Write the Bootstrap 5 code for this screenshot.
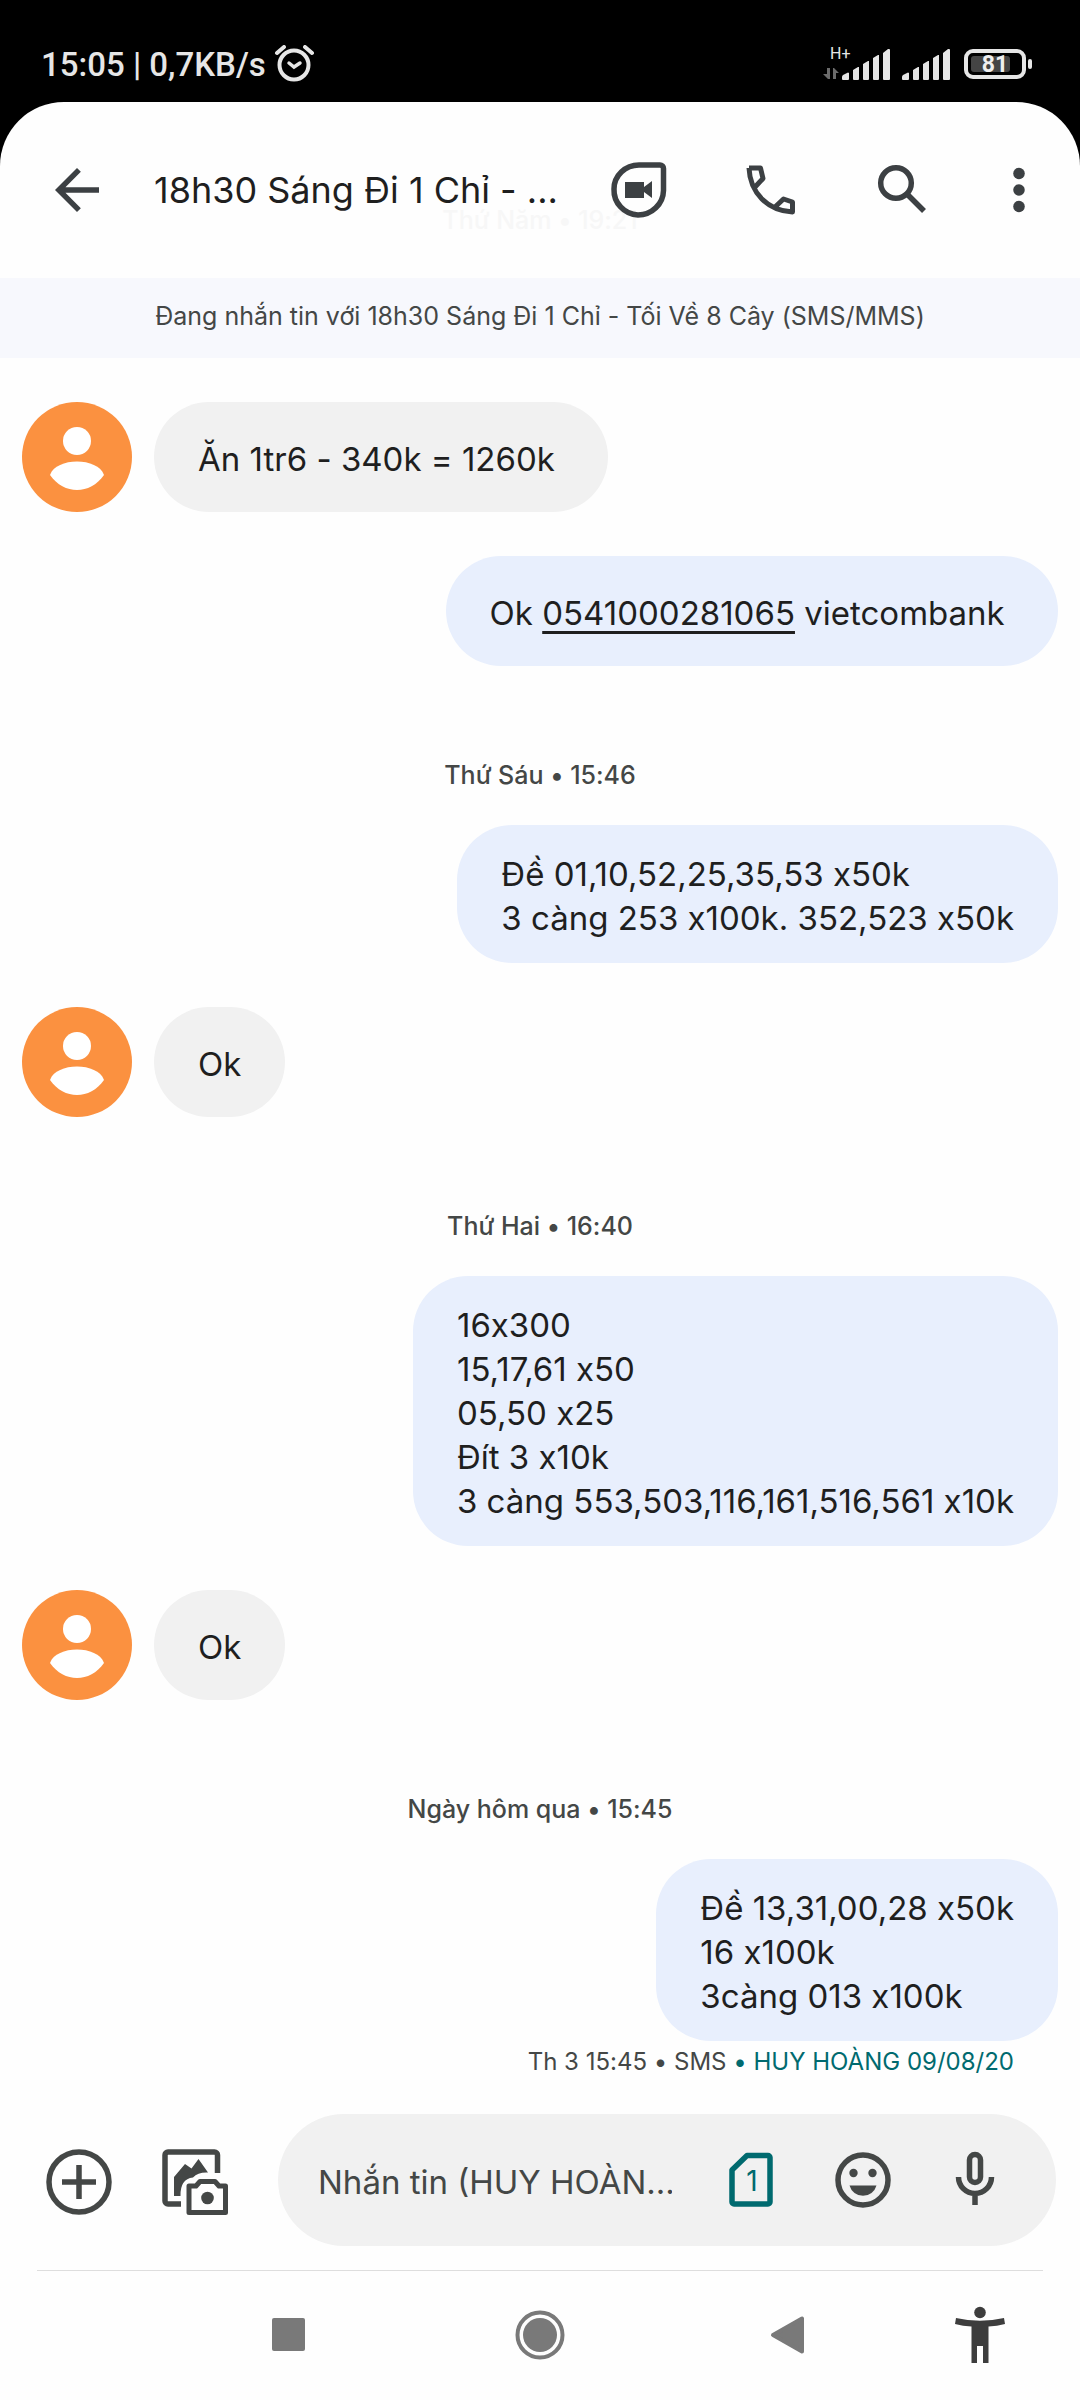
<!DOCTYPE html>
<html lang="vi">
<head>
<meta charset="utf-8">
<meta name="viewport" content="width=device-width, initial-scale=1">
<title>Tin nhắn</title>
<link href="https://cdn.jsdelivr.net/npm/bootstrap@5.3.0/dist/css/bootstrap.min.css" rel="stylesheet">
<style>
  body { background: #000; font-family: Inter, "Noto Sans", sans-serif; font-feature-settings: "calt" 0; color: #1f1f1f; }
  svg { display: block; fill: none; }
  .status { height: 102px; padding: 0 46px 0 41px; font-family: Roboto, sans-serif; color: #e6e6e6; }
  .status-left { font-size: 33px; line-height: 40px; font-weight: 500; padding-top: 45px; }
  .status-right { padding-top: 46px; }
  .screen { background: #fefefe; border-radius: 64px 64px 0 0; }
  .topbar { height: 176px; padding: 0 28px 0 44px; color: #3c4043; }
  .topbar-title { font-size: 36px; line-height: 48px; font-weight: 400; color: #1f1f1f; margin-left: 44px; }
  .ghost { left: 0; right: 0; top: 102px; font-size: 25px; line-height: 32px; font-weight: 500; color: #f7f7f7; }
  .icon-btn { width: 66px; height: 66px; padding: 0; border: 0; background: none; color: inherit; flex: none; }
  .tools { gap: 66px; }
  .tools .icon-btn:last-child { margin-left: -16px; }
  .banner { height: 80px; padding-bottom: 4px; background: #f7f8fd; color: #444746; font-size: 25px; line-height: 32px; }
  .thread { padding: 44px 22px 0; }
  .msg + .msg { margin-top: 44px; }
  .msg { gap: 22px; }
  .bubble { min-height: 110px; padding: 27px 44px 23px; border-radius: 55px; font-size: 33px; line-height: 44px; }
  .bubble-in { background: #f1f1f1; }
  .bubble-out { background: #e8effd; }
  .bubble a { color: inherit; text-underline-offset: 6px; text-decoration-thickness: 3px; }
  .stamp { font-size: 25px; line-height: 32px; font-weight: 500; color: #444746; margin: 93px 0 34px; }
  .meta { font-size: 24px; line-height: 32px; color: #444746; padding: 5px 44px 0; }
  .teal { color: #006a6f; }
  .composer { padding: 36px 24px 24px 46px; gap: 50px; color: #444746; }
  .field { height: 132px; min-width: 0; border-radius: 66px; background: #f1f1f1; padding: 0 48px 0 40px; gap: 46px; }
  .field input { border: 0; background: none; padding: 4px 0 0; font-size: 33px; line-height: 44px; color: #444746; width: 0; min-width: 0; outline: 0; }
  .field input::placeholder { color: #444746; opacity: 1; }
  .rule { height: 1px; background: #dedede; margin: 0 37px; }
  .sysnav { display: grid; grid-template-columns: 252fr 252fr 244fr 140fr; padding: 31px 30px 32px 162px; justify-items: center; color: #797979; }
  .a11y { color: #3d3d3d; }
</style>
<script src="https://cdn.jsdelivr.net/npm/bootstrap@5.3.0/dist/js/bootstrap.bundle.min.js"></script>
</head>
<body>
<svg width="0" height="0" class="position-absolute" aria-hidden="true">
  <symbol id="person" viewBox="0 0 110 110">
    <circle cx="55" cy="55" r="55" fill="#fb9140"/>
    <circle cx="55" cy="39" r="14" fill="#fff"/>
    <path d="M28 73C34 55 76 55 82 73C68 93 42 93 28 73Z" fill="#fff"/>
  </symbol>
  <symbol id="bars" viewBox="0 0 48 32">
    <path fill="currentColor" d="M0 28q0-1 1-2l4-2q1-1 2 0v6q0 1-1 1H1q-1 0-1-1zM11 21l5-3h1v12q0 1-1 1h-4q-1 0-1-1zM21 15l5-3h1v18q0 1-1 1h-4q-1 0-1-1zM31 9l5-3h1v24q0 1-1 1h-4q-1 0-1-1zM41 4l5-4h1q1 0 1 1v29q0 1-1 1h-5q-1 0-1-1z"/>
  </symbol>
</svg>

<header class="status d-flex justify-content-between align-items-start">
  <div class="status-left d-flex align-items-start">
    <span>15:05 | 0,7KB/s</span>
    <svg class="ms-2" width="42" height="38" viewBox="0 0 42 38" stroke="currentColor" stroke-width="4" stroke-linecap="round" aria-label="Báo thức"><circle cx="20" cy="20" r="14.500"/><path d="M3 8l7-6M31 2l7 6"/><path stroke-width="3.500" d="M15 18l5 4 6-4"/></svg>
  </div>
  <div class="status-right d-flex">
    <svg width="19" height="36" viewBox="0 0 19 36" aria-hidden="true"><path fill="#6b6b6b" d="M4 22h3v11H5l-5-5h4zM10 33V22h1l5 5h-3v6z"/></svg>
    <svg width="48" height="36" viewBox="0 0 48 36" class="overflow-visible"><text x="-12" y="13" font-size="16" fill="currentColor">H+</text><use href="#bars" y="3" width="48" height="32"/></svg>
    <svg class="ms-2" width="52" height="36" viewBox="-4 0 52 36"><use href="#bars" y="3" width="48" height="32"/></svg>
    <svg class="ms-2" width="76" height="36" viewBox="-6 0 76 36"><rect x="2" y="5" width="58" height="26" rx="7" stroke="currentColor" stroke-width="4"/><rect x="7" y="10" width="39" height="16" rx="3" fill="#444"/><rect x="64" y="13" width="4" height="10" rx="2" fill="currentColor"/><text x="31" y="26" text-anchor="middle" font-size="23" font-weight="700" fill="#efefef">81</text></svg>
  </div>
</header>

<div class="screen">
  <div class="topbar d-flex align-items-center position-relative">
    <div class="ghost position-absolute text-center" aria-hidden="true">Thứ Năm • 19:21</div>
    <button class="icon-btn position-relative" type="button" aria-label="Quay lại"><svg width="66" height="66" viewBox="0 0 24 24"><path fill="currentColor" d="M20 11H7.800l5.600-5.600L12 4l-8 8 8 8 1.400-1.400L7.800 13H20z"/></svg></button>
    <h1 class="topbar-title mb-0 flex-grow-1 text-nowrap position-relative">18h30 Sáng Đi 1 Chỉ - ...</h1>
    <div class="tools d-flex position-relative">
      <button class="icon-btn" type="button" aria-label="Gọi video"><svg width="66" height="66" viewBox="0 0 66 66"><path stroke="currentColor" stroke-width="5.500" d="M33 8H54a3.500 3.500 0 0 1 3.500 3.500V33.500A25 25 0 1 1 33 8Z"/><path fill="currentColor" d="M19 25h19v5l8-6v17l-8-6v6H19z"/></svg></button>
      <button class="icon-btn" type="button" aria-label="Gọi"><svg width="66" height="66" viewBox="0 0 66 66" stroke="currentColor" stroke-width="5" stroke-linejoin="round"><path d="M11 11H22.500L25 21.500L17.500 29.500M11 11C12 36 30 54 54.500 55V45L45.500 42L37 50"/></svg></button>
      <button class="icon-btn" type="button" aria-label="Tìm kiếm"><svg width="66" height="66" viewBox="0 0 66 66" stroke="currentColor" stroke-width="5.500"><circle cx="26" cy="26" r="15.300"/><path d="M37 37L54 54"/></svg></button>
      <button class="icon-btn" type="button" aria-label="Tùy chọn khác"><svg width="66" height="66" viewBox="0 0 24 24"><g fill="currentColor"><circle cx="12" cy="6" r="2.100"/><circle cx="12" cy="12" r="2.100"/><circle cx="12" cy="18" r="2.100"/></g></svg></button>
    </div>
  </div>
  <div class="banner d-flex align-items-center justify-content-center">Đang nhắn tin với 18h30 Sáng Đi 1 Chỉ - Tối Về 8 Cây (SMS/MMS)</div>

  <main class="thread">
    <div class="msg d-flex">
      <svg width="110" height="110" class="flex-shrink-0"><use href="#person"/></svg>
      <div class="bubble bubble-in d-flex align-items-center"><span>Ăn 1tr6 - 340k = 1260k&nbsp;</span></div>
    </div>
    <div class="msg d-flex justify-content-end">
      <div class="bubble bubble-out d-flex align-items-center"><span>Ok <a href="tel:0541000281065">0541000281065</a> vietcombank&nbsp;</span></div>
    </div>
    <div class="stamp text-center">Thứ Sáu • 15:46</div>
    <div class="msg d-flex justify-content-end">
      <div class="bubble bubble-out">Đề 01,10,52,25,35,53 x50k<br>3 càng 253 x100k. 352,523 x50k</div>
    </div>
    <div class="msg d-flex">
      <svg width="110" height="110" class="flex-shrink-0"><use href="#person"/></svg>
      <div class="bubble bubble-in d-flex align-items-center">Ok</div>
    </div>
    <div class="stamp text-center">Thứ Hai • 16:40</div>
    <div class="msg d-flex justify-content-end">
      <div class="bubble bubble-out">16x300<br>15,17,61 x50<br>05,50 x25<br>Đít 3 x10k<br>3 càng 553,503,116,161,516,561 x10k</div>
    </div>
    <div class="msg d-flex">
      <svg width="110" height="110" class="flex-shrink-0"><use href="#person"/></svg>
      <div class="bubble bubble-in d-flex align-items-center">Ok</div>
    </div>
    <div class="stamp text-center">Ngày hôm qua • 15:45</div>
    <div class="msg d-flex justify-content-end">
      <div class="bubble bubble-out">Đề 13,31,00,28 x50k<br>16 x100k<br>3càng 013 x100k</div>
    </div>
    <div class="meta text-end">Th 3 15:45 • SMS <span class="teal">• HUY HOÀNG 09/08/20</span></div>
  </main>

  <form class="composer d-flex align-items-center">
    <button class="icon-btn mt-1" type="button" aria-label="Thêm"><svg width="66" height="66" viewBox="0 0 66 66" stroke="currentColor" stroke-width="5.500"><circle cx="33" cy="33" r="30"/><path d="M33 16v34M16 33h34"/></svg></button>
    <button class="icon-btn mt-1" type="button" aria-label="Thư viện và máy ảnh"><svg width="66" height="66" viewBox="0 0 66 66"><g stroke="currentColor" stroke-width="5.500"><path d="M55.500 24V6a3 3 0 0 0-3-3H6a3 3 0 0 0-3 3v46a3 3 0 0 0 3 3h13"/><path stroke-width="5" stroke-linejoin="round" d="M27 37h7l4-4.500h15l4 4.500h6.500v26.500H27z"/></g><path fill="currentColor" d="M12 47V28L23 15l6.500 4.500 7-9.500L46 23.500Q36 23 31 28.500Q18 30 18.500 47z"/><circle cx="45.500" cy="49" r="6.300" fill="currentColor"/></svg></button>
    <div class="field d-flex align-items-center flex-grow-1">
      <input class="flex-grow-1" type="text" aria-label="Nhắn tin" placeholder="Nhắn tin (HUY HOÀN...">
      <button class="icon-btn teal" type="button" aria-label="SIM 1"><svg width="66" height="66" viewBox="0 0 66 66"><path stroke="currentColor" stroke-width="5.500" stroke-linejoin="round" d="M29 8.500H50a2 2 0 0 1 2 2V55a2 2 0 0 1-2 2H16a2 2 0 0 1-2-2V23z"/><text x="34" y="44" text-anchor="middle" font-size="28" fill="currentColor">1</text></svg></button>
      <button class="icon-btn" type="button" aria-label="Biểu tượng cảm xúc"><svg width="66" height="66" viewBox="0 0 66 66"><circle cx="33" cy="33" r="25" stroke="currentColor" stroke-width="5.500"/><g fill="currentColor"><circle cx="23.500" cy="26" r="4.200"/><circle cx="42.500" cy="26" r="4.200"/><path d="M19.500 38.500h27a14 14 0 0 1-27 0z"/></g></svg></button>
      <button class="icon-btn" type="button" aria-label="Ghi âm"><svg width="66" height="66" viewBox="0 0 66 66" stroke="currentColor" stroke-width="5.500"><rect x="27.500" y="7.500" width="11" height="28" rx="5.500"/><path d="M16.500 30a16.500 16.500 0 0 0 33 0M33 46v12"/></svg></button>
    </div>
  </form>
  <div class="rule"></div>
  <nav class="sysnav" aria-label="Điều hướng hệ thống">
    <button class="icon-btn" type="button" aria-label="Gần đây"><svg width="66" height="66"><rect x="17" y="16" width="33" height="33" rx="2" fill="currentColor"/></svg></button>
    <button class="icon-btn" type="button" aria-label="Trang chính"><svg width="66" height="66"><circle cx="33" cy="33" r="22.500" stroke="currentColor" stroke-width="4"/><circle cx="33" cy="33" r="17" fill="currentColor"/></svg></button>
    <button class="icon-btn" type="button" aria-label="Trở về"><svg width="66" height="66"><path fill="currentColor" stroke="currentColor" stroke-width="4" stroke-linejoin="round" d="M18 33L47 16.500v33z"/></svg></button>
    <button class="icon-btn a11y" type="button" aria-label="Hỗ trợ tiếp cận"><svg width="66" height="66"><circle cx="33" cy="10.500" r="5.800" fill="currentColor"/><path fill="currentColor" d="M9 16Q33 21.500 57 16l1 6q-8 2-16.500 2.500V61H36V44h-6v17h-5.500V24.500Q16 24 8 22z"/></svg></button>
  </nav>
</div>
</body>
</html>
